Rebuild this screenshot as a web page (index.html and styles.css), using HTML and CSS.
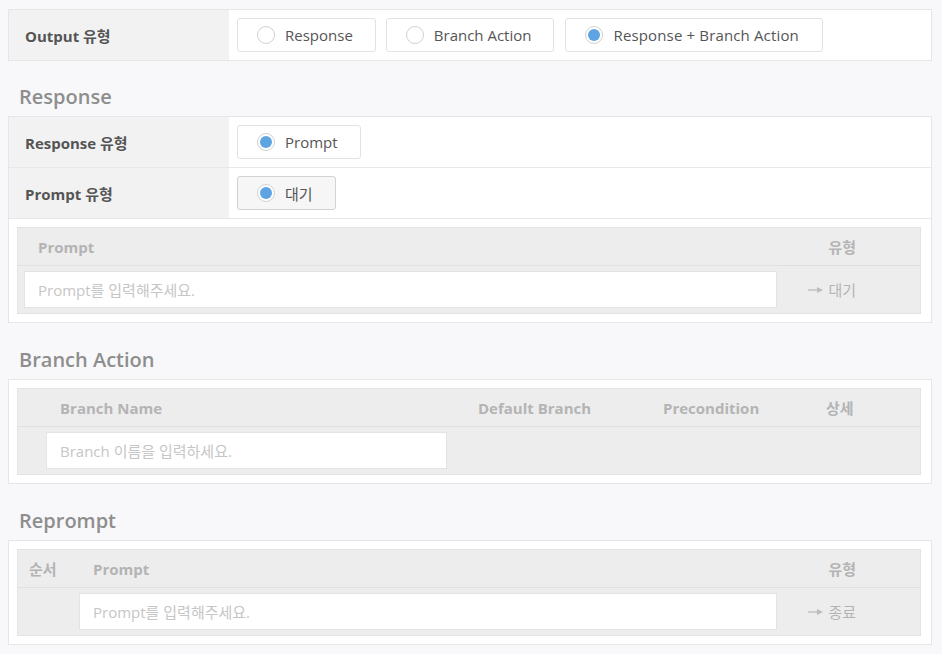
FILE: index.html
```html
<!DOCTYPE html>
<html lang="ko">
<head>
<meta charset="utf-8">
<title>Output</title>
<link rel="stylesheet" href="styles.css">
</head>
<body>
  <div class="panel">
    <div class="frow last">
      <div class="flabel">Output 유형</div>
      <div class="fvalue">
        <span class="rbtn"><span class="radio"></span>Response</span>
        <span class="rbtn"><span class="radio"></span>Branch Action</span>
        <span class="rbtn wide"><span class="radio on"></span>Response + Branch Action</span>
      </div>
    </div>
  </div>

  <h2 class="sec-title">Response</h2>
  <div class="panel">
    <div class="frow">
      <div class="flabel">Response 유형</div>
      <div class="fvalue">
        <span class="rbtn"><span class="radio on"></span>Prompt</span>
      </div>
    </div>
    <div class="frow">
      <div class="flabel">Prompt 유형</div>
      <div class="fvalue">
        <span class="rbtn active"><span class="radio on"></span>대기</span>
      </div>
    </div>
    <div class="twrap">
      <div class="gtable prompt-table">
        <div class="th"></div>
        <div class="th pl14">Prompt</div>
        <div class="th tr">유형</div>
        <div class="td"></div>
        <div class="td"><div class="input">Prompt를 입력해주세요.</div></div>
        <div class="td tr type"><svg class="arrow" width="15" height="8" viewBox="0 0 15 8"><path d="M0 4H10" stroke="#bdbdbd" stroke-width="1.4"/><path d="M9 1L15 4L9 7Z" fill="#bdbdbd"/></svg>대기</div>
      </div>
    </div>
  </div>

  <h2 class="sec-title next">Branch Action</h2>
  <div class="panel">
    <div class="twrap">
      <div class="gtable branch-table">
        <div class="th"></div>
        <div class="th pl14">Branch Name</div>
        <div class="th">Default Branch</div>
        <div class="th">Precondition</div>
        <div class="th">상세</div>
        <div class="td"></div>
        <div class="td"><div class="input branch-input">Branch 이름을 입력하세요.</div></div>
        <div class="td"></div>
        <div class="td"></div>
        <div class="td"></div>
      </div>
    </div>
  </div>

  <h2 class="sec-title next">Reprompt</h2>
  <div class="panel">
    <div class="twrap">
      <div class="gtable reprompt-table">
        <div class="th pl12">순서</div>
        <div class="th pl14">Prompt</div>
        <div class="th tr">유형</div>
        <div class="td"></div>
        <div class="td"><div class="input">Prompt를 입력해주세요.</div></div>
        <div class="td tr type"><svg class="arrow" width="15" height="8" viewBox="0 0 15 8"><path d="M0 4H10" stroke="#bdbdbd" stroke-width="1.4"/><path d="M9 1L15 4L9 7Z" fill="#bdbdbd"/></svg>종료</div>
      </div>
    </div>
  </div>
</body>
</html>
```

FILE: styles.css
```css
* { box-sizing: border-box; }

html, body {
  background: #f8f8fa;
}

body {
  margin: 0;
  padding: 9px 10px 0 8px;
  font-family: "Open Sans", "Noto Sans CJK KR", sans-serif;
  font-size: 15px;
  color: #555;
}

.panel {
  background: #fff;
  border: 1px solid #e6e6e6;
}

.frow {
  display: grid;
  grid-template-columns: 220px 1fr;
  height: 51px;
  border-bottom: 1px solid #e8e8e8;
}

.frow.last {
  height: 50px;
  border-bottom: none;
}

.flabel {
  background: #f2f2f2;
  display: flex;
  align-items: center;
  padding-left: 16px;
  font-weight: 700;
  color: #555;
}

.fvalue {
  display: flex;
  align-items: center;
  gap: 10px;
  padding-left: 8px;
}

.rbtn {
  display: inline-flex;
  align-items: center;
  height: 34px;
  padding: 0 22px 0 19px;
  border: 1px solid #e2e2e2;
  border-radius: 3px;
  background: #fff;
  color: #555;
  gap: 10px;
  white-space: nowrap;
}

.rbtn.wide {
  margin-left: 1px;
  padding-right: 23px;
  letter-spacing: 0.15px;
}

.rbtn.active {
  background: #f6f6f6;
  border-color: #d2d2d2;
}

.radio {
  width: 18px;
  height: 18px;
  border-radius: 50%;
  border: 1px solid #d2d2d2;
  background: #fff;
  position: relative;
  flex: none;
}

.radio.on::after {
  content: "";
  position: absolute;
  left: 2px;
  top: 2px;
  width: 12px;
  height: 12px;
  border-radius: 50%;
  background: #5ea4e2;
}

.sec-title {
  margin: 0;
  padding: 22px 0 6px 11px;
  font-size: 20px;
  line-height: 27px;
  font-weight: 600;
  color: #8e8e8e;
}

.sec-title.next {
  padding-top: 23px;
}

.twrap {
  padding: 8px 10px 8px 8px;
}

.gtable {
  display: grid;
  background: #ededee;
  border: 1px solid #e3e3e3;
}

.prompt-table {
  grid-template-columns: 6px 753px 1fr;
}

.branch-table {
  grid-template-columns: 28px 432px 185px 163px 1fr;
}

.reprompt-table {
  grid-template-columns: 61px 698px 1fr;
}

.th {
  height: 38px;
  border-bottom: 1px solid #e0e0e0;
  display: flex;
  align-items: center;
  font-weight: 700;
  color: #b4b4b4;
}

.th.tr, .td.tr {
  justify-content: flex-end;
  padding-right: 64px;
}

.pl14 { padding-left: 14px; }
.pl12 { padding-left: 11px; }

.td {
  height: 47px;
  display: flex;
  align-items: center;
}

.input {
  width: 100%;
  height: 37px;
  background: #fff;
  border: 1px solid #e3e3e3;
  display: flex;
  align-items: center;
  padding-left: 13px;
  color: #c6c6c6;
}

.branch-input {
  width: 401px;
}

.type {
  color: #b4b4b4;
  gap: 5px;
}

.arrow {
  display: block;
}
```
